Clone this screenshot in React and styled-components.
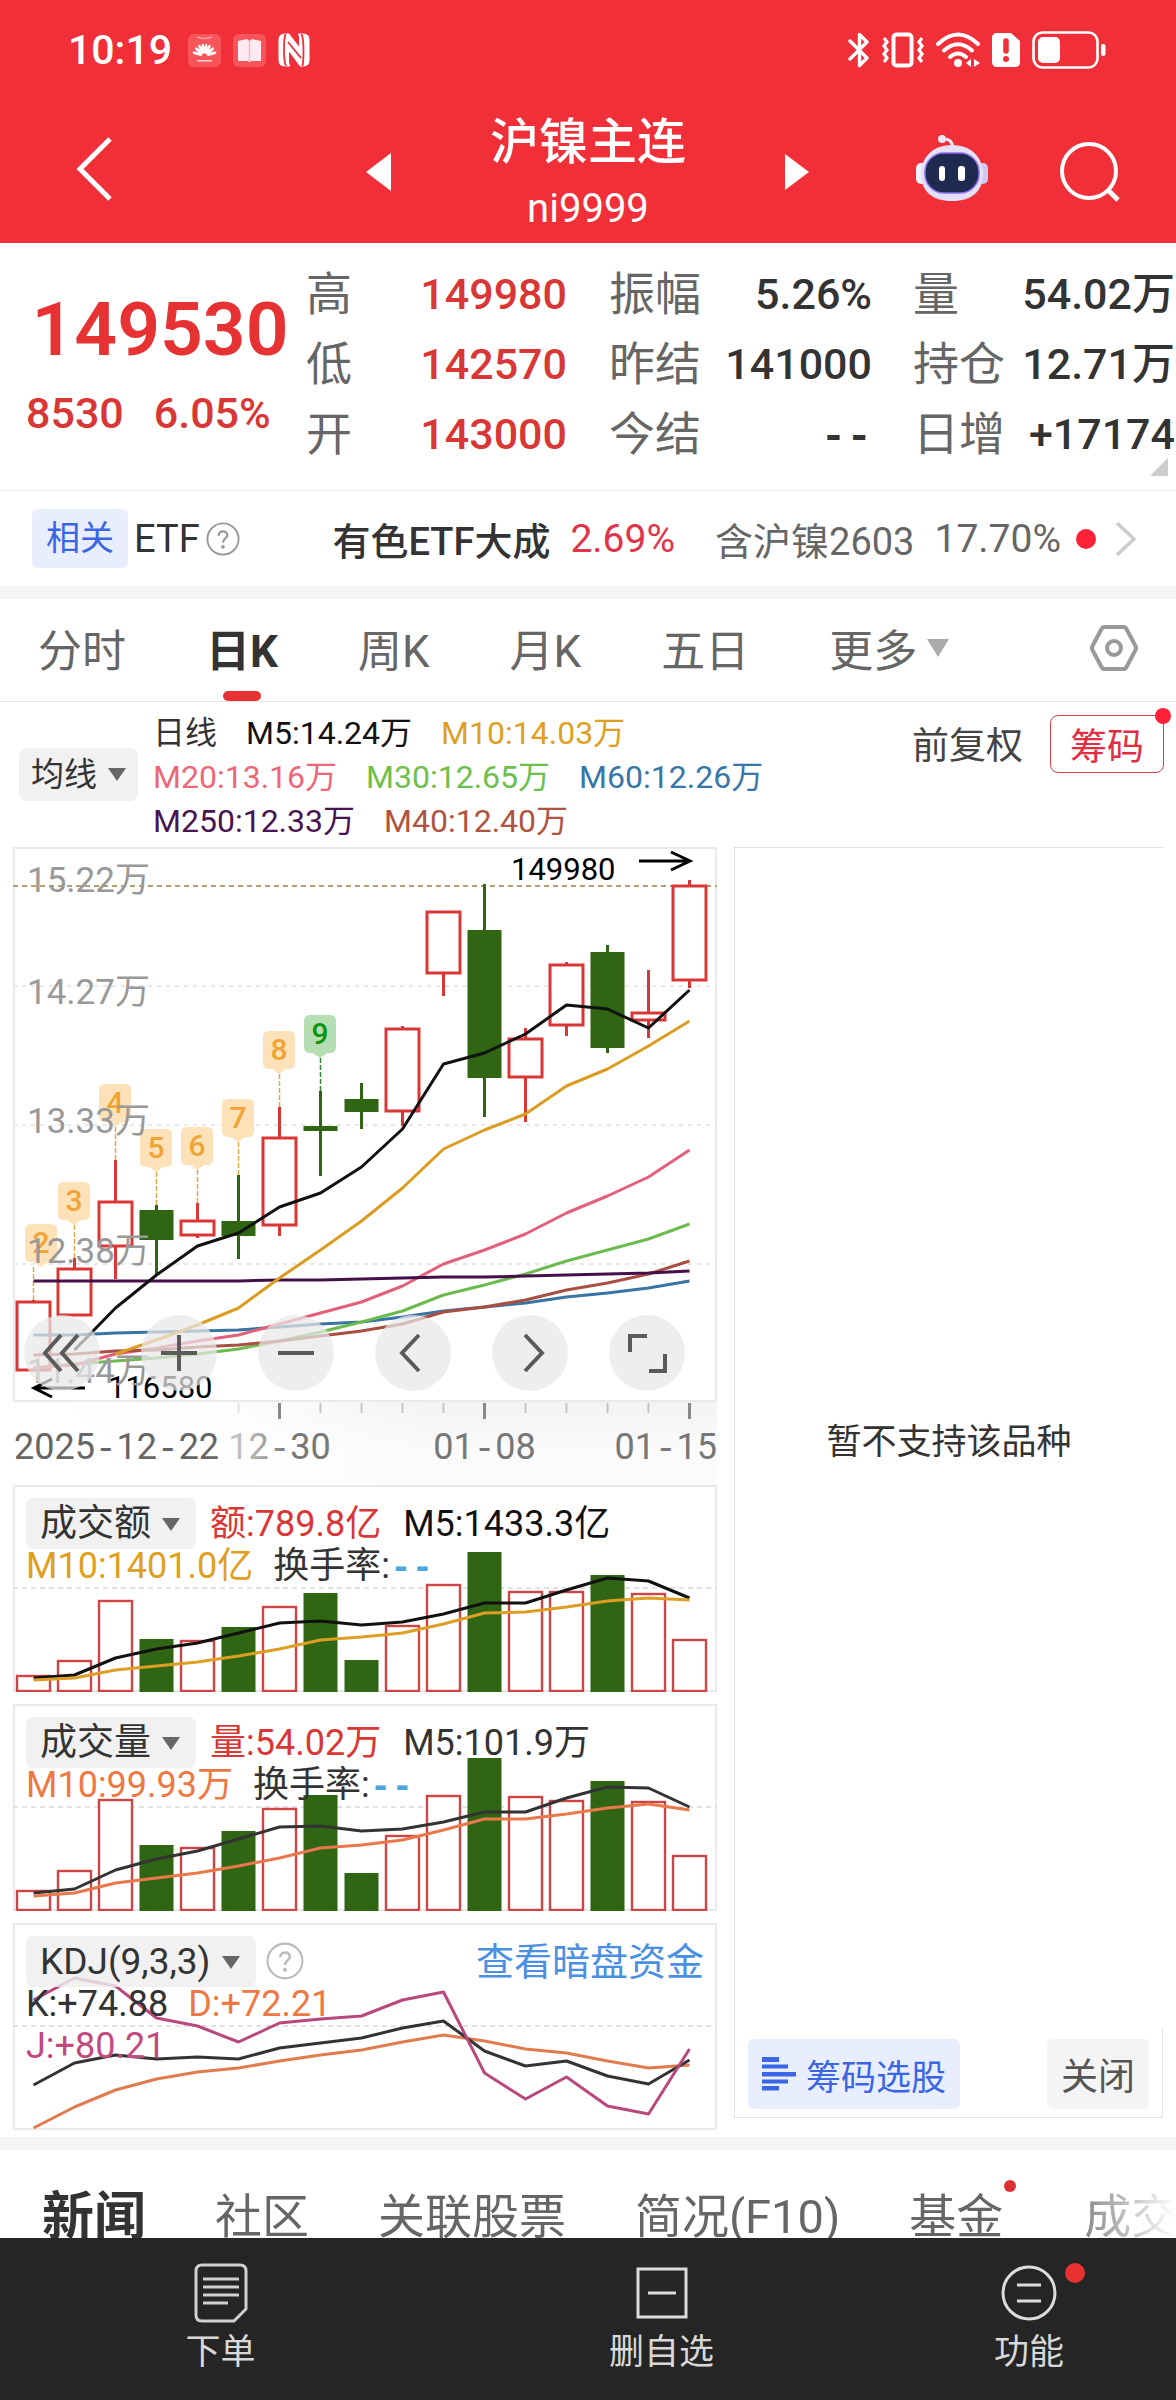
import React from "react";
import styled, { createGlobalStyle } from "styled-components";

const RED = "#d93636";
const GREEN = "#2f6513";

const GlobalStyle = createGlobalStyle`
  *, *::before, *::after { box-sizing: border-box; }
  body {
    margin: 0;
    background: #fff;
    color: #333;
    font-family: Roboto, "Noto Sans CJK SC", sans-serif;
  }
  button, select { font: inherit; color: inherit; border: 0; padding: 0; margin: 0; background: none; cursor: pointer; }
  a { color: inherit; text-decoration: none; }
  svg { display: block; flex: none; }
  dl, dd, dt, h1, p, ul { margin: 0; padding: 0; }
`;

/* ---------- header ---------- */
const Header = styled.header`
  background: #f12f38;
  color: #fff;
`;
const StatusBar = styled.div`
  height: 100px;
  padding: 0 70px 0 68px;
  display: flex;
  align-items: center;
  justify-content: space-between;
`;
const StatusGroup = styled.div`
  display: flex;
  align-items: center;
  gap: 12px;
`;
const Clock = styled.time`
  font-size: 41px;
  font-weight: 500;
  line-height: 44px;
  margin-right: 4px;
`;
const TitleBar = styled.div`
  height: 143px;
  display: grid;
  grid-template-columns: 1fr 444px 1fr;
  align-items: center;
`;
const BarStart = styled.div`
  padding: 0 0 6px 76px;
`;
const BarEnd = styled.div`
  display: flex;
  align-items: flex-end;
  justify-content: flex-end;
  gap: 72px;
  padding: 0 56px 8px 0;
`;
const Switcher = styled.div`
  display: flex;
  align-items: center;
  justify-content: space-between;
`;
const TitleText = styled.div`
  padding-top: 6px;
  text-align: center;
`;
const Title = styled.h1`
  font-size: 49px;
  font-weight: 500;
  line-height: 68px;
`;
const Code = styled.p`
  font-size: 40px;
  line-height: 64px;
`;
const IconButton = styled.button`
  display: block;
`;

/* ---------- quote ---------- */
const Quote = styled.section`
  position: relative;
  display: grid;
  grid-template-columns: 306fr 303fr 304fr 263fr;
  padding: 16px 0 21px;
  border-bottom: 1px solid #ececec;
`;
const PriceBlock = styled.div`
  color: #e63232;
  text-align: center;
  padding: 20px 0 0 14px;
`;
const Price = styled.div`
  font-size: 75px;
  font-weight: 600;
  line-height: 100px;
`;
const Change = styled.div`
  display: flex;
  gap: 30px;
  padding-left: 12px;
  font-size: 43px;
  font-weight: 500;
  line-height: 68px;
  color: ${RED};
`;
const Stats = styled.dl`
  padding-right: ${(p) => p.$end}px;
`;
const Stat = styled.div`
  display: flex;
  justify-content: space-between;
  height: 70px;
  line-height: 70px;
  white-space: nowrap;
`;
const StatName = styled.dt`
  font-size: 46px;
  color: #666;
`;
const StatValue = styled.dd`
  font-size: 43px;
  font-weight: 500;
  color: ${(p) => (p.$up ? RED : "#333")};
`;
const Dashes = styled.span`
  font-family: "Liberation Mono", monospace;
  font-weight: 700;
  color: ${(p) => p.$c || "inherit"};
`;
const Corner = styled.svg`
  position: absolute;
  right: 8px;
  bottom: 14px;
`;

/* ---------- related ETF ---------- */
const Related = styled.section`
  height: 95px;
  display: flex;
  align-items: center;
  padding: 0 40px 0 32px;
  font-size: 38px;
  white-space: nowrap;
`;
const Tag = styled.span`
  background: #e8eefe;
  color: #3a66e4;
  font-size: 34px;
  line-height: 59px;
  padding: 0 14px;
  border-radius: 6px;
  margin-right: 6px;
`;
const EtfHelp = styled(IconButton)`
  margin-left: 6px;
`;
const RelatedLink = styled.a`
  display: flex;
  flex: 1;
  align-items: center;
  justify-content: flex-end;
  color: #666;
`;
const FundName = styled.strong`
  color: #333;
  font-weight: 500;
  margin-right: 20px;
`;
const FundRate = styled.span`
  font-size: 39px;
  color: #e0344a;
  margin-right: 40px;
`;
const Weight = styled.span`
  font-size: 39px;
  margin: 0 15px 0 20px;
`;
const Dot = styled.i`
  display: block;
  width: ${(p) => p.$size}px;
  height: ${(p) => p.$size}px;
  border-radius: 50%;
  background: ${(p) => p.$color || "#fe2238"};
`;
const CornerDot = styled(Dot)`
  position: absolute;
  top: ${(p) => p.$top}px;
  right: ${(p) => p.$right}px;
`;
const Band = styled.div`
  height: 13px;
  background: #f4f4f4;
`;

/* ---------- period tabs ---------- */
const Tabs = styled.nav`
  height: 103px;
  display: flex;
  align-items: stretch;
  gap: 80px;
  padding: 0 38px;
  border-bottom: 1px solid #e4e4e4;
`;
const Tab = styled.button`
  position: relative;
  display: flex;
  align-items: center;
  gap: 10px;
  padding-bottom: 4px;
  font-size: 44px;
  color: ${(p) => (p.$active ? "#333" : "#666")};
  font-weight: ${(p) => (p.$active ? 700 : 400)};
  white-space: nowrap;
  &::after {
    content: "";
    display: ${(p) => (p.$active ? "block" : "none")};
    position: absolute;
    left: calc(50% - 19px);
    bottom: 0;
    width: 38px;
    height: 10px;
    border-radius: 5px;
    background: #e63232;
  }
  &:last-child { margin-left: auto; }
`;

/* ---------- average legend ---------- */
const Averages = styled.section`
  height: 145px;
  display: flex;
  align-items: flex-start;
  padding: 9px 12px 0 19px;
`;
const Picker = styled.label`
  position: relative;
  display: block;
  flex: none;
  margin-top: ${(p) => p.$top || 0}px;
`;
const Select = styled.select`
  appearance: none;
  display: block;
  height: ${(p) => (p.$small ? 53 : 51)}px;
  font-size: ${(p) => (p.$small ? 33 : 37)}px;
  padding: ${(p) => (p.$small ? "0 41px 0 12px" : "0 45px 0 14px")};
  border-radius: 8px;
  color: #333;
  background: rgba(238, 238, 238, 0.82);
`;
const PickerArrow = styled.svg`
  position: absolute;
  top: 20px;
  right: ${(p) => (p.$small ? 12 : 16)}px;
  pointer-events: none;
`;
const Legend = styled.div`
  flex: 1;
  display: flex;
  flex-direction: column;
  margin-left: 15px;
  font-size: 32px;
  line-height: 44px;
`;
const LegendLine = styled.div`
  display: flex;
  gap: 29px;
  white-space: nowrap;
`;
const Ink = styled.span`
  color: ${(p) => p.$c};
`;
const AdjustButton = styled.button`
  font-size: 37px;
  line-height: 72px;
  color: #444;
  margin-right: 27px;
`;
const ChipButton = styled.button`
  position: relative;
  margin-top: 4px;
  height: 58px;
  padding: 0 19px;
  font-size: 37px;
  color: #e22c42;
  border: 1px solid #d2404e;
  border-radius: 8px;
`;

/* ---------- charts ---------- */
const ChartArea = styled.section`
  display: grid;
  grid-template-columns: 704fr 429fr;
  gap: 17px;
  padding: 0 13px 7px;
`;
const ChartColumn = styled.div`
  min-width: 0;
`;
const Panel = styled.div`
  position: relative;
  box-shadow: inset 0 0 0 2px #eaeaea;
  & + & { margin-top: 12px; }
`;
const Plot = styled.svg`
  width: 100%;
  height: auto;
`;
const AxisPlot = styled(Plot)`
  background: linear-gradient(180deg, #f3f3f3, #fbfbfb 60%);
`;
const Tools = styled.div`
  position: absolute;
  left: 11px;
  right: 32px;
  bottom: 11px;
  display: flex;
  justify-content: space-between;
`;
const ToolButton = styled.button`
  width: 76px;
  height: 76px;
  border-radius: 50%;
  background: rgba(231, 231, 231, 0.72);
  display: flex;
  align-items: center;
  justify-content: center;
`;
const Overlay = styled.div`
  position: absolute;
  top: 13px;
  left: 13px;
  right: 13px;
  font-size: 36px;
  white-space: nowrap;
`;
const OverlayHead = styled.div`
  display: flex;
  height: 47px;
  line-height: 52px;
`;
const HeadValues = styled.div`
  display: flex;
  gap: 22px;
  margin-left: 14px;
`;
const HelpButton = styled.button`
  margin: 6px 0 0 10px;
  height: 38px;
`;
const DarkLink = styled.a`
  margin-left: auto;
  font-size: 38px;
  color: #4a90e2;
`;
const OverlayLine = styled.div`
  display: flex;
  gap: 20px;
  height: 42px;
  line-height: 42px;
`;
const SidePanel = styled.aside`
  display: flex;
  flex-direction: column;
  margin-bottom: 12px;
  border: solid #e2e2e2;
  border-width: 1px 0 1px 1px;
`;
const Empty = styled.p`
  flex: 1;
  display: flex;
  align-items: center;
  justify-content: center;
  font-size: 35px;
`;
const SideFoot = styled.div`
  display: flex;
  justify-content: space-between;
  padding: 11px 13px 8px;
  border-right: 1px solid #e2e2e2;
`;
const FootButton = styled.button`
  height: 70px;
  display: flex;
  align-items: center;
  gap: 10px;
  padding: 0 14px;
  border-radius: 6px;
  font-size: ${(p) => (p.$blue ? 35 : 37)}px;
  color: ${(p) => (p.$blue ? "#3a66e4" : "#555")};
  background: ${(p) => (p.$blue ? "#e8eefe" : "#f4f4f4")};
`;

/* ---------- news tabs and bottom bar ---------- */
const NewsTabs = styled.nav`
  height: 124px;
  display: flex;
  align-items: center;
  gap: 69px;
  padding-left: 42px;
  overflow: hidden;
  mask-image: linear-gradient(90deg, #000 calc(100% - 120px), transparent);
`;
const NewsTab = styled.button`
  position: relative;
  flex: none;
  font-size: ${(p) => (p.$active ? 52 : 47)}px;
  font-weight: ${(p) => (p.$active ? 700 : 400)};
  color: ${(p) => (p.$active ? "#333" : "#666")};
  margin-right: ${(p) => (p.$dotted ? 12 : 0)}px;
`;
const BottomBar = styled.nav`
  position: fixed;
  left: 0;
  right: 0;
  bottom: 0;
  height: 162px;
  display: flex;
  background: #252525;
  color: #d8d8d8;
`;
const BottomItem = styled.button`
  flex: ${(p) => p.$grow} 1 0;
  display: flex;
  flex-direction: column;
  align-items: center;
  padding-top: 24px;
  font-size: 35px;
  line-height: 50px;
`;
const BottomIcon = styled.span`
  position: relative;
  display: flex;
  align-items: center;
  justify-content: center;
  height: 62px;
  margin-bottom: 4px;
`;

/* ---------- icons ---------- */
const Down = ({ w = 18, h = 13, color = "#666" }) => (
  <svg width={w} height={h} viewBox="0 0 18 13" preserveAspectRatio="none" aria-hidden="true">
    <path d="M0 0H18L9 13Z" fill={color} />
  </svg>
);
const Help = ({ size, color = "#999" }) => (
  <svg width={size} height={size} viewBox="0 0 36 36" fill="none" stroke={color} strokeWidth="2" aria-hidden="true">
    <circle cx="18" cy="18" r="16.5" />
    <path d="M13.5 14.5c0-6 9-6 9-.6 0 3.6-4.500 3.600-4.500 8" strokeWidth="2.400" />
    <circle cx="18" cy="26.300" r="1" fill={color} />
  </svg>
);
const HuaweiIcon = () => (
  <svg width="33" height="33" viewBox="0 0 33 33" aria-hidden="true">
    <rect width="33" height="33" rx="6" fill="#f8555a" />
    <path d="M9 3q7.500 3 15 0" stroke="#ff9c98" fill="none" strokeWidth="1.500" />
    <g fill="#fff">
      {[-72, -48, -27, -9, 9, 27, 48, 72].map((a) => (
        <ellipse key={a} cx="16.500" cy="15.500" rx="1.500" ry="5" transform={`rotate(${a} 16.500 22) translate(0 -1)`} />
      ))}
      <rect x="9" y="26" width="15" height="1.500" opacity=".75" />
    </g>
  </svg>
);
const BookIcon = () => (
  <svg width="33" height="33" viewBox="0 0 33 33" aria-hidden="true">
    <rect width="33" height="33" rx="6" fill="#f8555a" />
    <path d="M5 7l9-2 2.500 2L19 5l9 2v20H18l-1.500 1.500L15 27H5Z" fill="#ffeaf2" />
    <path d="M16.500 7v20" stroke="#f5b6c8" strokeWidth="1.500" />
  </svg>
);
const NfcIcon = () => (
  <svg width="32" height="34" viewBox="0 0 32 34" aria-hidden="true">
    <path d="M7 .5h4l10 13V4l-1-3.500h5q6.500 0 6.500 6.500v20q0 6.500-6.500 6.500h-3L11 18.500V29l1 4.500H7Q.5 33.500.5 27V7Q.5.5 7 .5Z" fill="#fff" />
    <path d="M7.500 1Q6 5 6 17t2 16M23.500 1q2 4 2 16t-1 16M10 9l13 16" stroke="#f12f38" strokeWidth="1.800" fill="none" />
  </svg>
);
const BluetoothIcon = () => (
  <svg width="22" height="36" viewBox="0 0 22 36" fill="none" stroke="#fff" strokeWidth="3.400" strokeLinejoin="round" strokeLinecap="round" aria-hidden="true">
    <path d="M2 9l17 17-7.500 7.500V2.500L19 10 2 27" />
  </svg>
);
const VibrateIcon = () => (
  <svg width="42" height="36" viewBox="1 0 42 36" fill="none" stroke="#fff" aria-hidden="true">
    <rect x="12.500" y="2.500" width="18" height="31" rx="3" strokeWidth="4" />
    <path d="M3 6l3 4-3 4 3 4-3 4 3 4-3 4M41 6l-3 4 3 4-3 4 3 4-3 4 3 4" strokeWidth="3.200" />
  </svg>
);
const WifiIcon = () => (
  <svg width="44" height="36" viewBox="0 0 44 36" fill="none" stroke="#fff" strokeWidth="4" strokeLinecap="round" aria-hidden="true">
    <path d="M2 12Q22-7 42 12M8 18.500q14-12.500 28 0M14 25q8-7 16 0" />
    <circle cx="22" cy="31" r="4" fill="#fff" stroke="none" />
    <path d="M35 27v8l-5-4ZM38 27v8l6-4Z" fill="#fff" stroke="none" />
  </svg>
);
const SimIcon = () => (
  <svg width="28" height="34" viewBox="0 0 28 34" aria-hidden="true">
    <path d="M5 0h14l9 8v21q0 5-5 5H5q-5 0-5-5V5q0-5 5-5Z" fill="#fff" />
    <path d="M14 8v10" stroke="#f12f38" strokeWidth="5.500" strokeLinecap="round" />
    <circle cx="14" cy="26" r="3" fill="#f12f38" />
  </svg>
);
const BatteryIcon = () => (
  <svg width="74" height="38" viewBox="0 0 74 38" aria-hidden="true">
    <rect x="1.500" y="1.500" width="64" height="35" rx="9" fill="none" stroke="#fff" strokeWidth="2.600" />
    <rect x="6" y="6" width="22" height="26" rx="5" fill="#fff" />
    <rect x="69" y="13" width="4.500" height="12" rx="2" fill="#fff" />
  </svg>
);
const RobotIcon = () => (
  <svg width="72" height="68" viewBox="0 0 72 68" aria-hidden="true">
    <path d="M26 5q10-1 10.500 8" fill="none" stroke="#eee6f8" strokeWidth="3" />
    <circle cx="26" cy="5" r="4" fill="#eee6f8" />
    <rect x="0" y="29" width="14" height="21" rx="5" fill="#f1effc" />
    <rect x="58" y="29" width="14" height="21" rx="5" fill="#cfc9f0" />
    <path d="M36 11c21 0 31 14 31 29 0 17-11 27-31 27S5 57 5 40C5 25 15 11 36 11Z" fill="#e3e0f8" />
    <rect x="9" y="19" width="54" height="40" rx="19" fill="#1f2a50" stroke="#8d6bf0" strokeWidth="1.500" />
    <rect x="23" y="32" width="6" height="15" rx="3" fill="#fff" />
    <rect x="42" y="32" width="7" height="15" rx="3" fill="#fff" />
  </svg>
);

/* ---------- chart data ---------- */
const STEP = 41;
const cx = (i) => 33.5 + i * STEP;

// [body top, body bottom, high, low, rising]
const CANDLES = [
  [1302, 1370, 1300, 1370, 1], [1269, 1315, 1258, 1315, 1], [1202, 1246, 1160, 1279, 1],
  [1210, 1240, 1205, 1275, 0], [1221, 1235, 1203, 1238, 1], [1221, 1236, 1175, 1259, 0],
  [1138, 1225, 1107, 1236, 1], [1126, 1131, 1091, 1176, 0], [1099, 1112, 1083, 1129, 0],
  [1029, 1111, 1026, 1126, 1], [912, 973, 912, 996, 1], [930, 1078, 884, 1117, 0],
  [1039, 1077, 1028, 1122, 1], [965, 1025, 962, 1036, 1], [952, 1048, 945, 1053, 0],
  [1013, 1020, 970, 1038, 1], [886, 980, 880, 988, 1],
];
const AVERAGE_LINES = [
  { c: "#3a74a3", y: [1335, 1335, 1333, 1332, 1331, 1330, 1327, 1324, 1322, 1317, 1311, 1307, 1303, 1297, 1293, 1288, 1281] },
  { c: "#6dbb4f", y: [1368, 1364, 1361, 1358, 1354, 1349, 1341, 1332, 1322, 1311, 1295, 1285, 1274, 1261, 1250, 1239, 1224] },
  { c: "#e2607a", y: [1368, 1365, 1354, 1348, 1341, 1335, 1324, 1313, 1302, 1286, 1264, 1250, 1234, 1213, 1196, 1177, 1150] },
  { c: "#a84f42", y: [1355, 1354, 1351, 1350, 1347, 1345, 1341, 1336, 1331, 1324, 1312, 1307, 1300, 1290, 1283, 1274, 1261] },
  { c: "#451049", y: [1281, 1281, 1281, 1281, 1281, 1281, 1280, 1280, 1279, 1278, 1277, 1277, 1276, 1275, 1274, 1273, 1271] },
  { c: "#dc9c22", y: [null, null, 1354, 1340, 1325, 1308, 1278, 1250, 1221, 1188, 1149, 1130, 1114, 1086, 1069, 1046, 1021] },
  { c: "#111", y: [null, 1350, 1308, 1275, 1246, 1233, 1207, 1193, 1167, 1129, 1064, 1053, 1034, 1005, 1009, 1028, 990] },
];
// [digit, badge centre, candle index, badge top]
const BADGES = [
  [2, 41, 0, 1224], [3, 74, 1, 1182], [4, 115, 2, 1084], [5, 156, 3, 1129],
  [6, 197, 4, 1127], [7, 238, 5, 1099], [8, 279, 6, 1031], [9, 320, 7, 1015],
];
const PRICE_LABELS = [["15.22万", 892], ["14.27万", 1004], ["13.33万", 1133], ["12.38万", 1263], ["11.44万", 1383]];
const RISING = CANDLES.map((c) => c[4]);

const AMOUNT = {
  top: 1485, grid: 1588, base: 1692,
  bars: [1676, 1661, 1601, 1639, 1641, 1627, 1607, 1593, 1660, 1626, 1585, 1552, 1592, 1592, 1575, 1594, 1640],
  lines: [
    { c: "#111", y: [1678, 1675, 1658, 1649, 1643, 1633, 1623, 1621, 1625, 1622, 1614, 1603, 1603, 1590, 1578, 1581, 1598] },
    { c: "#dc9f24", y: [1680, 1678, 1670, 1666, 1662, 1656, 1649, 1640, 1637, 1633, 1624, 1613, 1612, 1607, 1601, 1598, 1600] },
  ],
};
const VOLUME = {
  top: 1704, grid: 1807, base: 1911,
  bars: [1891, 1871, 1800, 1845, 1848, 1831, 1809, 1795, 1873, 1836, 1796, 1758, 1797, 1801, 1781, 1802, 1856],
  lines: [
    { c: "#333", y: [1893, 1889, 1870, 1859, 1851, 1839, 1827, 1826, 1831, 1829, 1822, 1812, 1812, 1798, 1787, 1788, 1807] },
    { c: "#e9784a", y: [1896, 1893, 1883, 1878, 1873, 1866, 1858, 1848, 1845, 1840, 1830, 1819, 1819, 1814, 1808, 1804, 1810] },
  ],
};
const KDJ = {
  top: 1923, grid: 2026, base: 2130,
  bars: [],
  lines: [
    { c: "#e07b4e", y: [2128, 2107, 2090, 2079, 2072, 2068, 2061, 2055, 2050, 2042, 2035, 2041, 2049, 2053, 2061, 2068, 2065] },
    { c: "#333", y: [2085, 2063, 2055, 2059, 2057, 2059, 2048, 2043, 2038, 2028, 2021, 2051, 2066, 2061, 2076, 2084, 2060] },
    { c: "#b9487e", y: [2000, 1978, 1986, 2018, 2026, 2042, 2023, 2019, 2016, 2000, 1992, 2073, 2099, 2077, 2106, 2114, 2049] },
  ],
};

const Line = ({ line }) => (
  <polyline
    points={line.y.map((y, i) => (y === null ? null : `${cx(i)},${y}`)).filter(Boolean).join(" ")}
    fill="none" stroke={line.c} strokeWidth="3" strokeLinejoin="round"
  />
);

const Badge = ({ n, x, index, top }) => {
  const last = n === 9;
  return (
    <g>
      <path d={`M${cx(index)} ${top + 43}V${CANDLES[index][2]}`} stroke={last ? "#2f8a2f" : "#d9ad45"} strokeWidth="1.500" strokeDasharray="5 2" />
      <path
        d={`M${x - 10} ${top}h20q6 0 6 6v26q0 6-6 6h-3l-7 5-7-5h-3q-6 0-6-6v-26q0-6 6-6Z`}
        fill={last ? "#b5dfb3" : "#fde1b8"}
      />
      <text x={x} y={top + 29} textAnchor="middle" fontSize="30" fontWeight="500" fill={last ? "#0d950d" : "#f0a434"}>{n}</text>
    </g>
  );
};

const MainPlot = () => (
  <Plot viewBox="13 847 704 555" role="img" aria-label="日K">
    <path d="M13 986H717M13 1125H717M13 1264H717" stroke="#e8e8e8" strokeWidth="2" strokeDasharray="4 5" />
    <path d="M13 886H717" stroke="#b3a06c" strokeWidth="2" strokeDasharray="5 4" />
    {BADGES.map(([n, x, index, top]) => <Badge key={n} n={n} x={x} index={index} top={top} />)}
    {CANDLES.map(([t, b, hi, lo, up], i) => (
      <g key={i} stroke={up ? RED : GREEN} strokeWidth="3">
        <path d={`M${cx(i)} ${hi}V${t}M${cx(i)} ${b}V${lo}`} />
        <rect x={cx(i) - (up ? 16.5 : 15.5)} y={up ? t : t + 1.5} width={up ? 33 : 31} height={up ? b - t : b - t - 3} fill={up ? "#fff" : GREEN} />
      </g>
    ))}
    {AVERAGE_LINES.map((l) => <Line key={l.c} line={l} />)}
    <g stroke="#000" strokeWidth="3" fill="none">
      <path d="M639 861H690M671 852L690 861 671 870" />
      <path d="M85 1388H34M52 1379L34 1388 52 1397" />
    </g>
    <text x="511" y="880" fontSize="31" fill="#000">149980</text>
    <text x="108" y="1398" fontSize="31" fill="#000">116580</text>
    {PRICE_LABELS.map(([t, y]) => <text key={t} x="27" y={y} fontSize="35" fill="#999">{t}</text>)}
  </Plot>
);

// Dates are drawn with hyphens as wide as the digits.
const DateText = ({ value, ...rest }) => (
  <text {...rest}>
    {value.split("-").map((part, i) => (
      <React.Fragment key={i}>
        {i > 0 && <tspan fontFamily='"Liberation Mono", monospace'>-</tspan>}
        <tspan>{part}</tspan>
      </React.Fragment>
    ))}
  </text>
);

const Axis = () => (
  <AxisPlot viewBox="13 1402 704 83" aria-label="日期">
    <defs>
      <linearGradient id="dateFade">
        <stop offset="0" stopColor="#ccc" />
        <stop offset=".3" stopColor="#aaa" />
        <stop offset=".6" stopColor="#777" />
      </linearGradient>
      <linearGradient id="axisFade">
        <stop offset="0" stopColor="#fff" />
        <stop offset=".3" stopColor="#fff" stopOpacity=".85" />
        <stop offset=".6" stopColor="#fff" stopOpacity="0" />
      </linearGradient>
    </defs>
    <rect x="13" y="1402" width="704" height="83" fill="url(#axisFade)" />
    {[5, 7, 8, 9, 10, 12, 13, 14, 15].map((i) => (
      <path key={i} d={`M${cx(i)} 1403v10`} stroke={i === 5 ? "#e4e4e4" : "#c6c6c6"} strokeWidth="2" />
    ))}
    {[6, 11, 16].map((i) => <path key={i} d={`M${cx(i)} 1403v16`} stroke="#888" strokeWidth="3" />)}
    <g fontSize="36" fill="#666">
      <DateText x="14" y="1459" value="2025-12-22" />
      <DateText x={cx(6)} y="1459" textAnchor="middle" fill="url(#dateFade)" value="12-30" />
      <DateText x={cx(11)} y="1459" textAnchor="middle" fill="#777" value="01-08" />
      <DateText x="717" y="1459" textAnchor="end" fill="#777" value="01-15" />
    </g>
  </AxisPlot>
);

const SubPlot = ({ data, label }) => (
  <Plot viewBox={`13 ${data.top} 704 207`} role="img" aria-label={label}>
    <path d={`M13 ${data.grid}H717`} stroke="#d9d9d9" strokeWidth="1.500" strokeDasharray="5 4" />
    {data.bars.map((t, i) =>
      RISING[i] ? (
        <rect key={i} x={cx(i) - 16.5} y={t} width="33" height={data.base - 1 - t} fill="#fff" stroke="#cf4545" strokeWidth="2.400" />
      ) : (
        <rect key={i} x={cx(i) - 17} y={t} width="34" height={data.base - t} fill={GREEN} />
      )
    )}
    {data.lines.map((l) => <Line key={l.c} line={l} />)}
  </Plot>
);

const Chooser = ({ value, label, small, top }) => (
  <Picker $top={top}>
    <Select $small={small} aria-label={label} defaultValue={value}>
      <option>{value}</option>
    </Select>
    <PickerArrow $small={small} width="18" height="13" viewBox="0 0 18 13" aria-hidden="true">
      <path d="M0 0H18L9 13Z" fill="#666" />
    </PickerArrow>
  </Picker>
);

const TOOLS = [
  ["最早", "M24 9L8 27 24 45M41 9L25 27 41 45"],
  ["放大", "M25 9V45M7 27H43"],
  ["缩小", "M7 27H43"],
  ["左移", "M31 9L14 27 31 45"],
  ["右移", "M20 9L37 27 20 45"],
  ["全屏", "M8 26V10H25M27 45H43V28"],
];
const STATS = [
  { end: 42, up: true, rows: [["高", "149980"], ["低", "142570"], ["开", "143000"]] },
  { end: 41, up: false, rows: [["振幅", "5.26%"], ["昨结", "141000"], ["今结", "--"]] },
  { end: 1, up: false, rows: [["量", "54.02万"], ["持仓", "12.71万"], ["日增", "+17174"]] },
];

export default function App() {
  return (
    <>
      <GlobalStyle />
      <Header>
        <StatusBar>
          <StatusGroup>
            <Clock>10:19</Clock>
            <HuaweiIcon />
            <BookIcon />
            <NfcIcon />
          </StatusGroup>
          <StatusGroup>
            <BluetoothIcon />
            <VibrateIcon />
            <WifiIcon />
            <SimIcon />
            <BatteryIcon />
          </StatusGroup>
        </StatusBar>
        <TitleBar>
          <BarStart>
            <IconButton aria-label="返回">
              <svg width="38" height="64" viewBox="0 0 38 64" fill="none" stroke="#fff" strokeWidth="5">
                <path d="M34 2L4 32 34 62" />
              </svg>
            </IconButton>
          </BarStart>
          <Switcher>
            <IconButton aria-label="上一个">
              <svg width="25" height="38" viewBox="0 0 25 38"><path d="M25 0V38L0 19Z" fill="#fff" /></svg>
            </IconButton>
            <TitleText>
              <Title>沪镍主连</Title>
              <Code>ni9999</Code>
            </TitleText>
            <IconButton aria-label="下一个">
              <svg width="25" height="38" viewBox="0 0 25 38"><path d="M0 1V37L24 19Z" fill="#fff" /></svg>
            </IconButton>
          </Switcher>
          <BarEnd>
            <IconButton aria-label="智能助手"><RobotIcon /></IconButton>
            <IconButton aria-label="搜索">
              <svg width="60" height="60" viewBox="0 0 60 60" fill="none" stroke="#fff" strokeWidth="4">
                <circle cx="29" cy="29" r="27" />
                <path d="M48 48L58 58" strokeWidth="5" />
              </svg>
            </IconButton>
          </BarEnd>
        </TitleBar>
      </Header>

      <Quote>
        <PriceBlock>
          <Price>149530</Price>
          <Change><span>8530</span><span>6.05%</span></Change>
        </PriceBlock>
        {STATS.map((s) => (
          <Stats key={s.end} $end={s.end}>
            {s.rows.map(([name, value]) => (
              <Stat key={name}>
                <StatName>{name}</StatName>
                <StatValue $up={s.up}>{value === "--" ? <Dashes>--</Dashes> : value}</StatValue>
              </Stat>
            ))}
          </Stats>
        ))}
        <Corner width="18" height="18" viewBox="0 0 18 18" aria-hidden="true">
          <path d="M18 0V18H0Z" fill="#ccc" />
        </Corner>
      </Quote>

      <Related>
        <Tag>相关</Tag>
        <span>ETF</span>
        <EtfHelp aria-label="ETF说明"><Help size={34} /></EtfHelp>
        <RelatedLink href="#etf">
          <FundName>有色ETF大成</FundName>
          <FundRate>2.69%</FundRate>
          <span>含沪镍2603</span>
          <Weight>17.70%</Weight>
          <Dot $size={20} />
          <svg width="40" height="36" viewBox="0 0 40 36" fill="none" stroke="#ccc" strokeWidth="3.500" aria-hidden="true">
            <path d="M21 2L38 18 21 34" />
          </svg>
        </RelatedLink>
      </Related>
      <Band />

      <Tabs>
        <Tab>分时</Tab>
        <Tab $active>日K</Tab>
        <Tab>周K</Tab>
        <Tab>月K</Tab>
        <Tab>五日</Tab>
        <Tab>更多<Down w={22} h={18} color="#aaa" /></Tab>
        <Tab aria-label="设置">
          <svg width="48" height="46" viewBox="0 0 48 46" fill="none" stroke="#999" strokeWidth="4">
            <path d="M14.500 2h19q2 0 3 2L45.500 21q1 2 0 4L36.500 42q-1 2-3 2h-19q-2 0-3-2L2.500 25q-1-2 0-4L11.500 4q1-2 3-2Z" />
            <circle cx="24" cy="23" r="7" />
          </svg>
        </Tab>
      </Tabs>

      <Averages>
        <Chooser value="均线" label="指标" small top={37} />
        <Legend>
          <LegendLine>
            <Ink $c="#333">日线</Ink><Ink $c="#111">M5:14.24万</Ink><Ink $c="#e0a01e">M10:14.03万</Ink>
          </LegendLine>
          <LegendLine>
            <Ink $c="#ec6878">M20:13.16万</Ink><Ink $c="#6cc04c">M30:12.65万</Ink><Ink $c="#3777a8">M60:12.26万</Ink>
          </LegendLine>
          <LegendLine>
            <Ink $c="#4a1352">M250:12.33万</Ink><Ink $c="#b05340">M40:12.40万</Ink>
          </LegendLine>
        </Legend>
        <AdjustButton>前复权</AdjustButton>
        <ChipButton>筹码<CornerDot $size={16} $top={-8} $right={-8} /></ChipButton>
      </Averages>

      <ChartArea>
        <ChartColumn>
          <Panel>
            <MainPlot />
            <Tools>
              {TOOLS.map(([name, d]) => (
                <ToolButton key={name} aria-label={name}>
                  <svg width="50" height="54" viewBox="0 0 50 54" fill="none" stroke="#5a5a5a" strokeWidth="4"><path d={d} /></svg>
                </ToolButton>
              ))}
            </Tools>
          </Panel>
          <Axis />
          <Panel>
            <SubPlot data={AMOUNT} label="成交额" />
            <Overlay>
              <OverlayHead>
                <Chooser value="成交额" label="副图一" />
                <HeadValues><Ink $c={RED}>额:789.8亿</Ink><Ink $c="#111">M5:1433.3亿</Ink></HeadValues>
              </OverlayHead>
              <OverlayLine>
                <Ink $c="#e0a01e">M10:1401.0亿</Ink>
                <span>换手率:<Dashes $c="#4ba6de">--</Dashes></span>
              </OverlayLine>
            </Overlay>
          </Panel>
          <Panel>
            <SubPlot data={VOLUME} label="成交量" />
            <Overlay>
              <OverlayHead>
                <Chooser value="成交量" label="副图二" />
                <HeadValues><Ink $c={RED}>量:54.02万</Ink><Ink $c="#333">M5:101.9万</Ink></HeadValues>
              </OverlayHead>
              <OverlayLine>
                <Ink $c="#ee7844">M10:99.93万</Ink>
                <span>换手率:<Dashes $c="#4ba6de">--</Dashes></span>
              </OverlayLine>
            </Overlay>
          </Panel>
          <Panel>
            <SubPlot data={KDJ} label="KDJ" />
            <Overlay>
              <OverlayHead>
                <Chooser value="KDJ(9,3,3)" label="副图三" />
                <HelpButton aria-label="KDJ说明"><Help size={38} color="#bbb" /></HelpButton>
                <DarkLink href="#dark">查看暗盘资金</DarkLink>
              </OverlayHead>
              <OverlayLine><Ink $c="#333">K:+74.88</Ink><Ink $c="#ee7844">D:+72.21</Ink></OverlayLine>
              <OverlayLine><Ink $c="#c24a80">J:+80.21</Ink></OverlayLine>
            </Overlay>
          </Panel>
        </ChartColumn>
        <SidePanel>
          <Empty>暂不支持该品种</Empty>
          <SideFoot>
            <FootButton $blue>
              <svg width="34" height="34" viewBox="0 0 34 34" fill="#3a66e4" aria-hidden="true">
                <path d="M0 0h17v5H0ZM0 7.500h26v4H0ZM0 15h34v4.500H0ZM0 22.500h26v4H0ZM0 29h17v4.500H0Z" />
              </svg>
              筹码选股
            </FootButton>
            <FootButton>关闭</FootButton>
          </SideFoot>
        </SidePanel>
      </ChartArea>
      <Band />

      <NewsTabs>
        <NewsTab $active>新闻</NewsTab>
        <NewsTab>社区</NewsTab>
        <NewsTab>关联股票</NewsTab>
        <NewsTab>简况(F10)</NewsTab>
        <NewsTab $dotted>基金<CornerDot $size={12} $top={2} $right={-13} $color="#dc3030" /></NewsTab>
        <NewsTab>成交</NewsTab>
      </NewsTabs>

      <BottomBar>
        <BottomItem $grow={3}>
          <BottomIcon>
            <svg width="54" height="60" viewBox="0 0 54 60" fill="none" stroke="#d0d0d0" strokeWidth="3">
              <path d="M8 2H46q6 0 6 6V46L40 58H8q-6 0-6-6V8q0-6 6-6Z" />
              <path d="M9 16H45M9 24H45M9 32H45M9 40H34" />
            </svg>
          </BottomIcon>
          下单
        </BottomItem>
        <BottomItem $grow={3}>
          <BottomIcon>
            <svg width="52" height="52" viewBox="0 0 52 52" fill="none" stroke="#dcdcdc" strokeWidth="3">
              <path d="M2 2H50V50H2ZM12 26H40" />
            </svg>
          </BottomIcon>
          删自选
        </BottomItem>
        <BottomItem $grow={2}>
          <BottomIcon>
            <svg width="56" height="56" viewBox="0 0 56 56" fill="none" stroke="#dcdcdc" strokeWidth="3">
              <circle cx="28" cy="28" r="26" />
              <path d="M16 20H40M16 36H40" />
            </svg>
            <CornerDot $size={20} $top={1} $right={-28} $color="#e83232" />
          </BottomIcon>
          功能
        </BottomItem>
      </BottomBar>
    </>
  );
}
